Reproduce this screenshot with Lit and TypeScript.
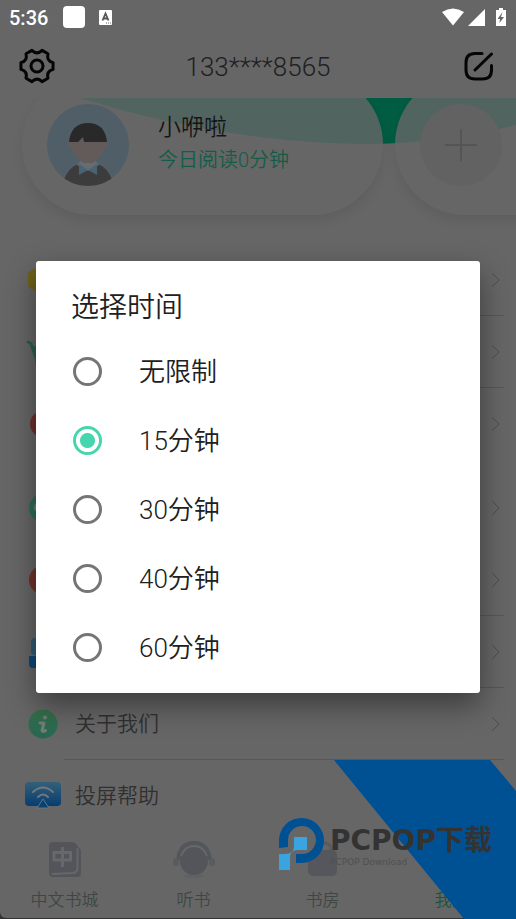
import { LitElement, html, css, nothing, type TemplateResult } from "lit";
import { customElement, state } from "lit/decorators.js";

interface MenuRow {
  icon: TemplateResult;
  label?: string;
  divider: boolean;
  chevron: boolean;
}

interface Tab {
  label: string;
  icon: TemplateResult | typeof nothing;
  active?: boolean;
}

// Six blunt teeth joined by shallow curved valleys.
function gearOutline(cx: number, cy: number, outer: number, inner: number): string {
  const at = (deg: number, r: number) => {
    const a = (deg * Math.PI) / 180;
    return `${(cx + r * Math.cos(a)).toFixed(2)} ${(cy + r * Math.sin(a)).toFixed(2)}`;
  };
  let d = `M${at(-12, outer)}`;
  for (let k = 0; k < 6; k++) {
    d += `L${at(k * 60 + 12, outer)}Q${at(k * 60 + 30, inner)} ${at(k * 60 + 48, outer)}`;
  }
  return d + "Z";
}

const gearIcon = html`<svg width="38" height="38" viewBox="0 0 38 38" fill="none" stroke="#050505" stroke-width="3" stroke-linejoin="round">
  <path d=${gearOutline(19, 19, 16.4, 10.6)} /><circle cx="19" cy="19" r="6" />
</svg>`;

const editIcon = html`<svg width="30" height="30" viewBox="0 0 30 30" fill="none" stroke="#050505" stroke-width="3" stroke-linecap="round">
  <path d="M18 2.500H11Q2 2.500 2 11.500V19Q2 28 11 28H18.500Q27.500 28 27.500 19V14.500" /><path d="M11 19L27.500 3" />
</svg>`;

const coinIcon = html`<svg width="36" height="36" viewBox="0 0 36 36">
  <path d="M18 2L30 9Q32 10 32 12V23Q32 25 30 26L18 34L5 26Q3 25 3 23V12Q3 10 5 9Z" fill="#6f611c" />
</svg>`;

const cartIcon = html`<svg width="36" height="36" viewBox="0 0 36 36">
  <path d="M3 8L6 9.500L12 27H29" fill="none" stroke="#2a604f" stroke-width="3" stroke-linecap="round" />
  <path d="M6 12H32L28 23H10Z" fill="#2a604f" /><circle cx="12" cy="29" r="2" fill="#2a604f" />
</svg>`;

const disc = (fill: string, r = 14) =>
  html`<svg width="36" height="36" viewBox="0 0 36 36"><circle cx="18" cy="18" r=${r} fill=${fill} /></svg>`;

const bubbleIcon = html`<svg width="36" height="36" viewBox="0 0 36 36">
  <circle cx="18" cy="18" r="14" fill="#2b7056" /><path d="M13 13Q9 16 11 20" fill="none" stroke="#718078" stroke-width="3" />
</svg>`;

const deskIcon = html`<svg width="36" height="36" viewBox="0 0 36 36">
  <rect x="6" y="4" width="24" height="17" rx="4" fill="#305a78" />
  <path d="M4 22H32V31Q32 34 29 34H8Q4 34 4 30Z" fill="#0f4778" />
</svg>`;

const infoIcon = html`<svg width="36" height="36" viewBox="0 0 36 36">
  <defs><linearGradient id="info" x1="0" y1="0" x2="0" y2="1"><stop offset="0" stop-color="#34704a" /><stop offset="1" stop-color="#286753" /></linearGradient></defs>
  <circle cx="18" cy="18" r="14.500" fill="url(#info)" />
  <circle cx="20" cy="11.500" r="2" fill="#747c77" />
  <path d="M15 17H19L17 24.500Q17 26 20.500 24.500" fill="none" stroke="#747c77" stroke-width="3" stroke-linejoin="round" stroke-linecap="round" />
</svg>`;

const castIcon = html`<svg width="36" height="36" viewBox="0 0 36 36">
  <defs><linearGradient id="cast" x1="0" y1="0" x2="0" y2="1"><stop offset="0" stop-color="#346078" /><stop offset="1" stop-color="#073c70" /></linearGradient></defs>
  <rect x="0" y="4" width="36" height="24" rx="4" fill="url(#cast)" />
  <path d="M8 14Q18 5 28 14M13 19Q18 14 23 19" fill="none" stroke="#707880" stroke-width="2" stroke-linecap="round" />
  <path d="M18 21L24 30H12Z" fill="#084173" stroke="#667782" />
</svg>`;

const chevron = html`<svg width="10" height="16" viewBox="0 0 10 16" fill="none" stroke="#4e4e4e" stroke-width="1"><path d="M1 1L8 8L1 15" /></svg>`;

const bookCityIcon = html`<svg width="44" height="40" viewBox="0 0 44 40">
  <path d="M10 2H28Q32 2 34 5L36 8Q38 9 38 12V34Q38 37 34 37H10Q6 37 6 33V6Q6 2 10 2Z" fill="#53555a" />
  <path d="M34.500 8V28Q34.500 32.500 30 33L9 34" fill="none" stroke="#65676b" stroke-width="2" />
  <path d="M11 12.500H27.500V20H11ZM19.500 7V27" fill="none" stroke="#66686b" stroke-width="3" />
</svg>`;

const listenIcon = html`<svg width="44" height="40" viewBox="0 0 44 40">
  <ellipse cx="22" cy="36" rx="10" ry="2" fill="#606163" />
  <circle cx="22" cy="21" r="14" fill="#53555a" />
  <path d="M6 20Q8 3 22 3T38 20" fill="none" stroke="#53565b" stroke-width="4" />
  <path d="M9 16Q13 6 22 6T35 16" fill="none" stroke="#66676b" stroke-width="2" />
  <rect x="1" y="18" width="6" height="8" rx="3" fill="#595b5f" /><rect x="37" y="18" width="6" height="8" rx="3" fill="#595b5f" />
</svg>`;

const studyIcon = html`<svg width="44" height="40" viewBox="0 0 44 40">
  <path d="M14 12V8Q14 3 22 3T30 8V12" fill="none" stroke="#5a5b60" stroke-width="3" />
  <rect x="7" y="10" width="29" height="26" rx="5" fill="#56575d" />
</svg>`;

const MENU: MenuRow[][] = [
  [
    { icon: coinIcon, divider: true, chevron: true },
    { icon: cartIcon, divider: true, chevron: true },
    { icon: disc("#702f2d", 13), divider: false, chevron: true },
  ],
  [
    { icon: bubbleIcon, divider: false, chevron: true },
    { icon: disc("#70332a"), divider: true, chevron: true },
    { icon: deskIcon, divider: true, chevron: true },
    { icon: infoIcon, label: "关于我们", divider: true, chevron: true },
    { icon: castIcon, label: "投屏帮助", divider: false, chevron: false },
  ],
];

const TABS: Tab[] = [
  { label: "中文书城", icon: bookCityIcon },
  { label: "听书", icon: listenIcon },
  { label: "书房", icon: studyIcon },
  { label: "我的", icon: nothing, active: true },
];

const LIMITS = ["无限制", "15分钟", "30分钟", "40分钟", "60分钟"];

@customElement("status-bar")
class StatusBar extends LitElement {
  static styles = css`
    :host { display: flex; align-items: center; height: 34px; padding: 0 9px; box-sizing: border-box; color: #fff; }
    .time { font: 500 20px/24px Roboto, sans-serif; margin-right: 15px; padding-top: 2px; }
    .app { width: 22px; height: 22px; border-radius: 4px; background: #fff; margin-right: 14px; }
    .fill { flex: 1; }
    svg { display: block; }
  `;
  render() {
    return html`
      <span class="time">5:36</span>
      <span class="app"></span>
      <svg width="14" height="16" viewBox="0 0 14 16">
        <rect y="1" width="13" height="15" rx="1" fill="#fff" />
        <path d="M3.500 11.500L6.500 4.500L9.500 11.500M4.500 9.500H8.500" fill="none" stroke="#555" stroke-width="1.800" />
        <path d="M7 14H13" stroke="#666" stroke-dasharray="1 1" />
      </svg>
      <span class="fill"></span>
      <svg width="66" height="20" viewBox="0 0 66 20" fill="#fff">
        <path d="M1 5Q12 -2 23 5L12 18.500Z" /><path d="M27 19L44 2V19Z" />
        <path d="M55 3H58V1H62V3H65V19H55Z" /><path d="M61.500 5L56.500 12H59L58.500 16L63 10H60Z" fill="#666" />
      </svg>
    `;
  }
}

@customElement("profile-strip")
class ProfileStrip extends LitElement {
  static styles = css`
    :host { display: block; position: relative; height: 146px; overflow: hidden; }
    .wave { position: absolute; top: 0; left: 0; width: 100%; height: 46px; }
    .cards { position: relative; display: flex; gap: 12px; padding-left: 22px; margin-top: -24px; }
    .card { flex: none; display: flex; align-items: center; gap: 29px; box-sizing: border-box; width: 73%; height: 141px;
      padding: 0 25px; border-radius: 71px; background: rgba(103, 103, 103, 0.8); box-shadow: 0 6px 12px rgba(0, 0, 0, 0.08); }
    .avatar { flex: none; display: block; }
    .name { font-size: 23px; line-height: 32px; font-weight: inherit; color: #151515; margin: 0; }
    .read { font-size: 20px; line-height: 32px; color: #145c47; margin: 0; }
    .copy { margin-top: -2px; }
    .add { display: grid; place-items: center; width: 82px; height: 82px; padding: 0; border: 0; border-radius: 50%; background: #626262; }
  `;
  render() {
    return html`
      <svg class="wave" viewBox="0 0 516 46" preserveAspectRatio="none">
        <path d="M80 0Q225 45 370 46Q450 45 516 27V0Z" fill="#005c42" />
      </svg>
      <div class="cards">
        <section class="card">
          <svg class="avatar" width="82" height="82" viewBox="0 0 82 82">
            <defs><clipPath id="face"><circle cx="41" cy="41" r="41" /></clipPath></defs>
            <g clip-path="url(#face)">
              <rect width="82" height="82" fill="#505f67" />
              <path d="M16 78Q22 62 32 60H50Q60 62 66 78V82H16Z" fill="#3c3c3c" />
              <path d="M34 56H48L52 61L41 67L30 61Z" fill="#666c70" />
              <path d="M22 36Q20 42 24 44Q30 56 37 59H45Q53 56 58 44Q62 42 60 36Z" fill="#625b5a" />
              <path d="M22 38Q24 19 41 19Q58 19 60 38H37L36 33L31 38Z" fill="#292929" />
              <path d="M32 60L41 66L50 60V71L41 66L32 71Z" fill="#486473" />
            </g>
          </svg>
          <div class="copy">
            <h2 class="name">小咿啦</h2>
            <p class="read">今日阅读0分钟</p>
          </div>
        </section>
        <section class="card">
          <button class="add" aria-label="+">
            <svg width="32" height="32" viewBox="0 0 32 32" stroke="#555" stroke-width="2"><path d="M16 0V32M0 16H32" /></svg>
          </button>
        </section>
      </div>
    `;
  }
}

@customElement("menu-list")
class MenuList extends LitElement {
  static styles = css`
    :host { display: flex; flex-direction: column; gap: 12px; }
    .row { display: flex; align-items: center; height: 72px; padding: 0 12px 0 25px; color: #303030; text-decoration: none; }
    .icon { flex: none; width: 36px; height: 36px; }
    .body { flex: 1; display: flex; align-items: center; justify-content: space-between; box-sizing: border-box; height: 72px;
      margin-left: 3px; padding: 0 3px 0 11px; border-bottom: 1px solid transparent; font-size: 21px; line-height: 32px; }
    .lined { border-bottom-color: #575757; }
    svg { display: block; }
  `;
  render() {
    return MENU.map(
      (group) => html`<div>
        ${group.map(
          (row) => html`<a class="row" href="#">
            <span class="icon">${row.icon}</span>
            <span class="body ${row.divider ? "lined" : ""}"><span>${row.label ?? nothing}</span>${row.chevron ? chevron : nothing}</span>
          </a>`
        )}
      </div>`
    );
  }
}

@customElement("tab-bar")
class TabBar extends LitElement {
  static styles = css`
    :host { display: grid; grid-template-columns: repeat(4, 1fr); padding: 4px 0 6px; }
    .tab { display: flex; flex-direction: column; align-items: center; gap: 8px; color: #3f4644; font-size: 17px; line-height: 24px; text-decoration: none; }
    .active { color: #14573f; }
    .icon { width: 44px; height: 40px; }
    svg { display: block; }
  `;
  render() {
    return TABS.map(
      (t) => html`<a class="tab ${t.active ? "active" : ""}" href="#"><span class="icon">${t.icon}</span><span>${t.label}</span></a>`
    );
  }
}

@customElement("site-mark")
class SiteMark extends LitElement {
  static styles = css`
    :host { display: block; width: 237px; height: 159px; pointer-events: none; }
    .band { position: absolute; inset: 0; }
    .brand { position: relative; display: flex; gap: 5px; padding-top: 57px; }
    .name { font: 700 28px/32px "DejaVu Sans", "Noto Sans CJK SC", sans-serif; color: #333; white-space: nowrap; }
    .sub { font: 9px/10px "DejaVu Sans", sans-serif; color: #505050; }
    .words { padding-top: 8px; }
    .logo { flex: none; }
  `;
  render() {
    return html`
      <svg class="band" width="237" height="159" viewBox="0 0 237 159"><path d="M55 0H211L237 31V159H185Z" fill="#005094" /></svg>
      <div class="brand">
        <svg class="logo" width="46" height="54" viewBox="0 0 46 54">
          <path d="M0 31V23A22.500 22.500 0 1 1 22.500 46H17V37H22.500A14 14 0 1 0 9 23V30Z" fill="#005094" />
          <path d="M15 20H28V33H19Q11 33 11 40V53H0V37H6Q15 37 15 29Z" fill="#39a4e0" />
        </svg>
        <div class="words"><div class="name">PCPOP下载</div><div class="sub">PCPOP Download</div></div>
      </div>
    `;
  }
}

@customElement("time-dialog")
class TimeDialog extends LitElement {
  @state() private selected = 1;

  static styles = css`
    :host { display: block; padding: 0 36px; }
    .panel { margin: 0; padding: 0 34px 11px 35px; background: #fff; border-radius: 3px; box-shadow: 0 12px 30px rgba(0, 0, 0, 0.42); color: #202020; }
    .title { margin: 0; padding: 27px 0 9px; font-size: 28px; line-height: 40px; font-weight: inherit; }
    .group { margin: 0; padding: 0; border: 0; }
    .option { display: flex; align-items: center; gap: 37px; height: 69px; padding-left: 2px; font-size: 26px; line-height: 36px; }
    .text { padding-top: 2px; }
    .radio { appearance: none; box-sizing: border-box; width: 29px; height: 29px; margin: 0; border: 3px solid #757575; border-radius: 50%; }
    .radio:checked { border-color: #46d6ad; background: radial-gradient(circle, #46d6ad 7px, #fff 8px); }
  `;
  render() {
    return html`
      <section class="panel" role="dialog" aria-labelledby="title">
        <h1 class="title" id="title">选择时间</h1>
        <fieldset class="group" aria-labelledby="title">
          ${LIMITS.map(
            (text, i) => html`<label class="option">
              <input class="radio" type="radio" name="limit" .checked=${i === this.selected} @change=${() => (this.selected = i)} />
              <span class="text">${text}</span>
            </label>`
          )}
        </fieldset>
      </section>
    `;
  }
}

@customElement("app-root")
class AppRoot extends LitElement {
  static styles = css`
    :host { display: block; position: relative; min-height: 100vh; overflow: hidden; background: #333;
      font-family: Roboto, "Noto Sans CJK SC", sans-serif; font-weight: 350; }
    .page { min-height: calc(100vh - 1px); display: flex; flex-direction: column; background: #666; border-radius: 0 0 6px 6px; }
    .header { display: flex; align-items: center; justify-content: space-between; height: 64px; padding: 0 22px 0 18px; box-sizing: border-box; }
    .phone { margin: 0; padding-top: 2px; font-size: 26px; line-height: 32px; color: #202020; }
    .tool { padding: 0; border: 0; background: none; display: grid; width: 38px; height: 38px; align-content: center; }
    .end { width: 34px; justify-content: end; }
    .tabs { margin-top: auto; }
    .mark { position: absolute; right: 0; bottom: 0; }
    .layer { position: absolute; inset: 34px 0 0; display: grid; align-content: center; }
  `;
  render() {
    return html`
      <main class="page">
        <status-bar></status-bar>
        <header class="header">
          <button class="tool">${gearIcon}</button>
          <p class="phone">133****8565</p>
          <button class="tool end">${editIcon}</button>
        </header>
        <profile-strip></profile-strip>
        <menu-list></menu-list>
        <tab-bar class="tabs"></tab-bar>
      </main>
      <site-mark class="mark"></site-mark>
      <div class="layer"><time-dialog></time-dialog></div>
    `;
  }
}
